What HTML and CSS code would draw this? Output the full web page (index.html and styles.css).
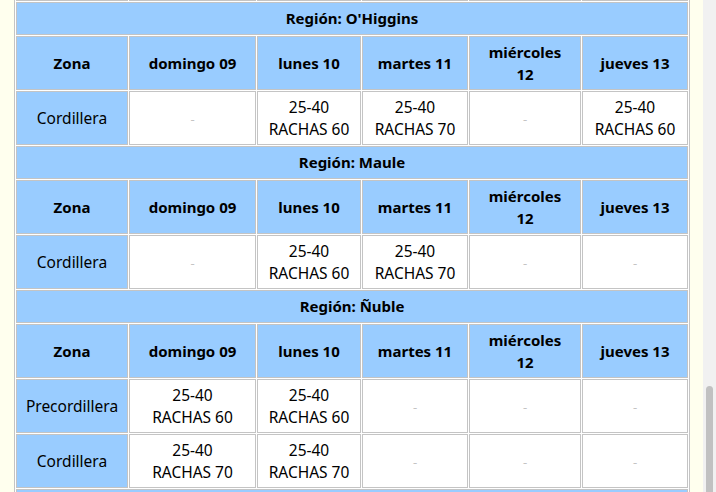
FILE: index.html
```html
<!DOCTYPE html>
<html lang="es">
<head>
<meta charset="utf-8">
<title>Pronóstico de viento</title>
<link rel="stylesheet" href="styles.css">
</head>
<body>
<main class="page">
  <table class="forecast">
    <colgroup>
      <col class="c-zona"><col class="c-dom"><col class="c-lun"><col class="c-mar"><col class="c-mie"><col class="c-jue">
    </colgroup>
    <tbody>
      <tr class="data">
        <td class="zona">Cordillera</td>
        <td>25-40<br>RACHAS 60</td>
        <td>25-40<br>RACHAS 60</td>
        <td>25-40<br>RACHAS 70</td>
        <td><span class="dash">-</span></td>
        <td><span class="dash">-</span></td>
      </tr>

      <tr class="region"><th colspan="6">Región: O'Higgins</th></tr>
      <tr class="head">
        <th>Zona</th><th>domingo 09</th><th>lunes 10</th><th>martes 11</th><th>miércoles<br>12</th><th>jueves 13</th>
      </tr>
      <tr class="data">
        <td class="zona">Cordillera</td>
        <td><span class="dash">-</span></td>
        <td>25-40<br>RACHAS 60</td>
        <td>25-40<br>RACHAS 70</td>
        <td><span class="dash">-</span></td>
        <td>25-40<br>RACHAS 60</td>
      </tr>

      <tr class="region"><th colspan="6">Región: Maule</th></tr>
      <tr class="head">
        <th>Zona</th><th>domingo 09</th><th>lunes 10</th><th>martes 11</th><th>miércoles<br>12</th><th>jueves 13</th>
      </tr>
      <tr class="data">
        <td class="zona">Cordillera</td>
        <td><span class="dash">-</span></td>
        <td>25-40<br>RACHAS 60</td>
        <td>25-40<br>RACHAS 70</td>
        <td><span class="dash">-</span></td>
        <td><span class="dash">-</span></td>
      </tr>

      <tr class="region"><th colspan="6">Región: Ñuble</th></tr>
      <tr class="head">
        <th>Zona</th><th>domingo 09</th><th>lunes 10</th><th>martes 11</th><th>miércoles<br>12</th><th>jueves 13</th>
      </tr>
      <tr class="data">
        <td class="zona">Precordillera</td>
        <td>25-40<br>RACHAS 60</td>
        <td>25-40<br>RACHAS 60</td>
        <td><span class="dash">-</span></td>
        <td><span class="dash">-</span></td>
        <td><span class="dash">-</span></td>
      </tr>
      <tr class="data">
        <td class="zona">Cordillera</td>
        <td>25-40<br>RACHAS 70</td>
        <td>25-40<br>RACHAS 70</td>
        <td><span class="dash">-</span></td>
        <td><span class="dash">-</span></td>
        <td><span class="dash">-</span></td>
      </tr>

      <tr class="region"><th colspan="6">Región: Biobío</th></tr>
    </tbody>
  </table>
</main>
<div class="scrollbar"><div class="thumb"></div></div>
</body>
</html>
```
FILE: styles.css
```css
html, body {
  margin: 0;
  padding: 0;
  background: #ffffee;
  height: 492px;
  overflow: hidden;
}

body {
  font-family: "Noto Sans", "Open Sans", sans-serif;
  font-size: 15px;
  color: #000;
}

.page {
  padding: 0 26px 0 14px;
}

.forecast {
  width: 676px;
  margin-top: -55px;
  table-layout: fixed;
  border: 1px solid #c4c4c4;
  border-spacing: 1px;
  background: #ffffff;
}

.c-zona { width: 112px; }
.c-dom { width: 127px; }
.c-lun { width: 104px; }
.c-mar { width: 106px; }
.c-mie { width: 112px; }
.c-jue { width: 106px; }

.forecast th,
.forecast td {
  border: 1px solid #c4c4c4;
  padding: 4px 2px;
  text-align: center;
  vertical-align: middle;
  line-height: 22px;
}

.forecast td {
  font-size: 15.5px;
}

.forecast th {
  background: #99ccff;
  font-weight: 700;
}

.region th {
  height: 23px;
  padding-top: 3px;
  padding-bottom: 5px;
}

.head th {
  height: 44px;
}

.data td {
  background: #ffffff;
  height: 44px;
}

.data td.zona {
  background: #99ccff;
}

.dash {
  color: #c4c4c4;
  font-size: 13px;
}

.scrollbar {
  position: fixed;
  top: 0;
  right: 0;
  width: 13px;
  height: 100%;
  background: #f1f1f1;
}

.thumb {
  position: absolute;
  left: 3px;
  width: 7px;
  top: 386px;
  height: 140px;
  border-radius: 4px;
  background: #c1c1c1;
}
```
